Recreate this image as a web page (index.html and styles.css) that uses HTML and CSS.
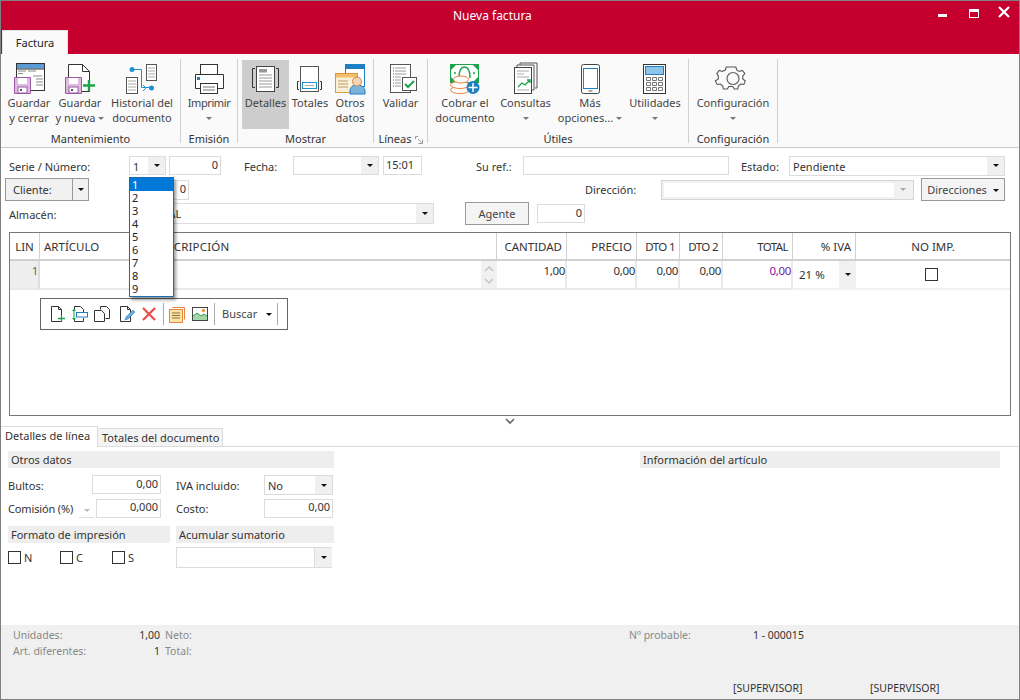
FILE: index.html
```html
<!DOCTYPE html>
<html lang="es">
<head>
<meta charset="utf-8">
<title>Nueva factura</title>
<link rel="stylesheet" href="styles.css">
</head>
<body>
<div class="window">
  <header class="titlebar">
    <div class="title-row">
      <span class="title">Nueva factura</span>
      <div class="win-btns">
        <span class="win-min"></span>
        <span class="win-max"></span>
        <svg class="win-close" width="12" height="12" viewBox="0 0 12 12"><path d="M1 1l10 10M11 1L1 11" stroke="#fff" stroke-width="2.200" fill="none"/></svg>
      </div>
    </div>
    <div class="tab-row"><span class="ribbon-tab">Factura</span></div>
  </header>

  <section class="ribbon">
    <div class="group g1">
      <div class="btns">
        <div class="rb w48">
          <svg width="38" height="34" viewBox="10 61 38 34"><rect x="16.500" y="63.500" width="28" height="27" fill="#fff" stroke="#333"/><rect x="17" y="64" width="27" height="4.500" fill="#5b9bd5"/><path d="M16 69h29" stroke="#333"/><path d="M18 71h8M18 73.500h5M28 71h8M33 76h9M36 79h7M36 82h7M36 85h7" stroke="#888" fill="none"/><path d="M14.500 77.500h16v16h-16z" fill="#dcbcdc" stroke="#9b59a6"/><rect x="18" y="78" width="9" height="6" fill="#fff"/><rect x="18" y="87" width="9" height="6" fill="#fff" stroke="#9b59a6"/><rect x="20" y="89" width="2" height="2" fill="#555"/></svg>
          <span>Guardar</span><span>y cerrar</span>
        </div>
        <div class="rb w54">
          <svg width="38" height="34" viewBox="61 61 38 34"><path d="M68.500 64.500h14l7 7v20h-21z" fill="#fff" stroke="#333"/><path d="M82.500 64.500v7h7" fill="none" stroke="#333"/><path d="M65.500 77.500h16v16h-16z" fill="#dcbcdc" stroke="#9b59a6"/><rect x="69" y="78" width="9" height="6" fill="#fff"/><rect x="69" y="87" width="9" height="6" fill="#fff" stroke="#9b59a6"/><rect x="71" y="89" width="2" height="2" fill="#555"/><path d="M89 80v11M83 85.500h12" stroke="#1aa34a" stroke-width="2.400" fill="none"/></svg>
          <span>Guardar</span><span>y nueva<i class="caret"></i></span>
        </div>
        <div class="rb w70">
          <svg width="38" height="34" viewBox="123 61 38 34"><rect x="146.500" y="64.500" width="10" height="16" fill="#fff" stroke="#555"/><path d="M148 68h7M148 71h7M148 74h7M148 77h7" stroke="#aaa"/><rect x="126.500" y="77.500" width="11" height="16" fill="#fff" stroke="#555"/><path d="M128 81h8M128 84h8M128 87h8M128 90h8" stroke="#aaa"/><path d="M132 69.500h9.500v18h9" fill="none" stroke="#1f8fd0"/><circle cx="132" cy="69.500" r="2.500" fill="#1f8fd0"/><circle cx="151.500" cy="88" r="2.500" fill="#1f8fd0"/><path d="M143 85l3 3-3 3" fill="none" stroke="#1f8fd0"/></svg>
          <span>Historial del</span><span>documento</span>
        </div>
      </div>
      <div class="group-label">Mantenimiento</div>
    </div>

    <div class="group g2">
      <div class="btns">
        <div class="rb w56">
          <svg width="38" height="34" viewBox="190 61 38 34"><rect x="200.500" y="64.500" width="17" height="10" fill="#fff" stroke="#333"/><path d="M195.500 74.500h28v14h-28z" fill="#fff" stroke="#333"/><rect x="197" y="77" width="3" height="3" fill="#1f7fc4"/><rect x="200.500" y="83.500" width="17" height="10" fill="#fff" stroke="#333"/><path d="M203 87h12M203 90h12" stroke="#777"/></svg>
          <span>Imprimir</span><span><i class="caret solo"></i></span>
        </div>
      </div>
      <div class="group-label">Emisión</div>
    </div>

    <div class="group g3">
      <div class="btns">
        <div class="rb w47 active">
          <svg width="38" height="34" viewBox="246 61 38 34"><rect x="255.500" y="66.500" width="18" height="25" fill="#fff" stroke="#444"/><rect x="258" y="69" width="8" height="3.500" fill="#999"/><path d="M258 75h13M258 78h13M258 81h13M258 84h13M258 87h13" stroke="#999"/><path d="M254 68.500h-2.500v19h2.500M275 68.500h2.500v19h-2.500" fill="none" stroke="#333"/></svg>
          <span>Detalles</span>
        </div>
        <div class="rb w42">
          <svg width="38" height="34" viewBox="291 61 38 34"><rect x="300.500" y="66.500" width="18" height="25" fill="#fff" stroke="#555"/><rect x="302.500" y="82.500" width="14" height="6" fill="#fff" stroke="#1f8fd0"/><path d="M305 85.500h9" stroke="#aaa"/><path d="M299 81.500h-1.500v8h1.500M320 81.500h1.500v8h-1.500" fill="none" stroke="#333"/></svg>
          <span>Totales</span>
        </div>
        <div class="rb w38">
          <svg width="34" height="34" viewBox="333 61 34 34"><rect x="345.500" y="64.500" width="19" height="22" fill="#fff" stroke="#1f7fc4"/><rect x="346" y="65" width="18" height="4" fill="#1f7fc4"/><rect x="335.500" y="73.500" width="22" height="19" fill="#fdf0d8" stroke="#d99a3c"/><rect x="336" y="74" width="21" height="3.500" fill="#f3bd6c"/><path d="M338 81h10M338 84h10M338 87h10" stroke="#b89a6a"/><path d="M350 94v-3c0-4 3-6 7-6s8 2 8 6v3z" fill="#7bb3da" stroke="#1f7fc4"/><circle cx="357" cy="81.500" r="4.500" fill="#f7d3b5" stroke="#c98a55"/></svg>
          <span>Otros</span><span>datos</span>
        </div>
      </div>
      <div class="group-label">Mostrar</div>
    </div>

    <div class="group g4">
      <div class="btns">
        <div class="rb w53">
          <svg width="38" height="34" viewBox="381 61 38 34"><rect x="389.500" y="64.500" width="20" height="28" fill="#fff" stroke="#555"/><path d="M394 68h11M394 71h11M394 74h11M394 77h6M394 80h6M394 83h6M394 86h6" stroke="#999"/><path d="M392 68h1M392 71h1M392 74h1M392 77h1M392 80h1M392 83h1M392 86h1" stroke="#c0392b"/><rect x="401.500" y="77.500" width="14" height="13" fill="#fff" stroke="#555"/><path d="M404 84l3 3 6-6" fill="none" stroke="#1aa34a" stroke-width="2"/></svg>
          <span>Validar</span>
        </div>
      </div>
      <div class="group-label lines">Líneas<svg class="launcher" width="8" height="8" viewBox="0 0 8 8"><path d="M.5 3V.5H3M3 3l3.500 3.500M7.500 3.500v4h-4" fill="none" stroke="#999"/></svg></div>
    </div>

    <div class="group g5">
      <div class="btns">
        <div class="rb w62">
          <svg width="38" height="34" viewBox="446 61 38 34"><rect x="450.500" y="64.500" width="28" height="18" fill="#fff" stroke="#1aa34a"/><path d="M451 65h5l-5 5zM478 65h-5l5 5zM451 82h5l-5-5zM478 82h-5l5-5z" fill="#1aa34a"/><path d="M459 78c0-8 2-11 5.500-11s5.500 3 5.500 11" fill="none" stroke="#1aa34a" stroke-width="1.500"/><circle cx="455" cy="73" r="1" fill="#1aa34a"/><circle cx="474" cy="73" r="1" fill="#1aa34a"/><ellipse cx="460" cy="90" rx="9.500" ry="3.500" fill="#fff" stroke="#e8843c"/><ellipse cx="460" cy="85" rx="9.500" ry="3.500" fill="#fff" stroke="#e8843c"/><ellipse cx="461" cy="79.500" rx="7.500" ry="3.500" fill="#fff" stroke="#e8843c"/><circle cx="473" cy="87.500" r="6.500" fill="#1f7fc4"/><path d="M473 83v9M468.500 87.500h9" stroke="#fff" stroke-width="1.500"/></svg>
          <span>Cobrar el</span><span>documento</span>
        </div>
        <div class="rb w59">
          <svg width="38" height="34" viewBox="506 61 38 34"><path d="M519 65.500v-2.500h17v25h-2" fill="none" stroke="#555"/><path d="M516 67.500v-2.500h17v25h-2" fill="#fff" stroke="#555"/><rect x="513.500" y="67.500" width="17" height="26" fill="#fff" stroke="#444"/><path d="M516 71h12M516 74h7M516 77h12" stroke="#aaa"/><path d="M517 87l4-4 3 2 5-5M526 80h3v3" fill="none" stroke="#1aa34a" stroke-width="1.300"/><path d="M516 90h12" stroke="#aaa"/></svg>
          <span>Consultas</span><span><i class="caret solo"></i></span>
        </div>
        <div class="rb w70">
          <svg width="38" height="34" viewBox="571 61 38 34"><rect x="581.500" y="64.500" width="18" height="29" rx="2" fill="#fff" stroke="#444"/><rect x="583.500" y="68.500" width="14" height="20" fill="#fff" stroke="#1f7fc4"/><path d="M588.500 91h4" stroke="#555"/></svg>
          <span>Más</span><span>opciones...<i class="caret"></i></span>
        </div>
        <div class="rb w60">
          <svg width="38" height="34" viewBox="636 61 38 34"><rect x="643.500" y="64.500" width="22" height="29" fill="#fff" stroke="#333"/><rect x="645.500" y="66.500" width="18" height="8" fill="#8ec3ea" stroke="#1f7fc4"/><path d="M646.500 77.500h4v3h-4zM652.500 77.500h4v3h-4zM658.500 77.500h4v3h-4zM646.500 82.500h4v3h-4zM652.500 82.500h4v3h-4zM658.500 82.500h4v3h-4zM646.500 87.500h4v3h-4zM652.500 87.500h4v3h-4zM658.500 87.500h4v3h-4z" fill="#fff" stroke="#777"/></svg>
          <span>Utilidades</span><span><i class="caret solo"></i></span>
        </div>
      </div>
      <div class="group-label">Útiles</div>
    </div>

    <div class="group g6">
      <div class="btns">
        <div class="rb w88">
          <svg width="38" height="34" viewBox="714 61 38 34"><path d="M729 66.500h-3.500l-1 3-3 1.500-3-1-2.500 3 1.500 2.500v3l-3 2 2 3.500 3-.5 2.500 2 .5 3h4l1.500-2.500h4l1.500 2.500h3.500l.5-3 2.500-2 3 .5 1.500-3.500-2.500-2v-3l2-2.500-2.500-3-3 1-2.500-1.500-1-3h-4.500z" transform="translate(.8 .5)" fill="none" stroke="#555" stroke-width="1.100"/><circle cx="733" cy="78.500" r="6" fill="none" stroke="#666" stroke-width="1.200"/></svg>
          <span>Configuración</span><span><i class="caret solo"></i></span>
        </div>
      </div>
      <div class="group-label">Configuración</div>
    </div>
  </section>

  <section class="form">
    <div class="form-row r1">
      <label class="lbl l-serie">Serie / Número:</label>
      <div class="serie-wrap">
        <div class="combo c-serie"><span class="val">1</span><span class="arrow"><i></i></span></div>
        <ul class="dropdown">
          <li class="sel">1</li><li>2</li><li>3</li><li>4</li><li>5</li><li>6</li><li>7</li><li>8</li><li>9</li>
        </ul>
      </div>
      <div class="input i-num">0</div>
      <label class="lbl l-fecha">Fecha:</label>
      <div class="combo c-fecha"><span class="val"></span><span class="arrow"><i></i></span></div>
      <div class="input i-time">15:01</div>
      <label class="lbl l-ref">Su ref.:</label>
      <div class="input i-ref"></div>
      <label class="lbl l-estado">Estado:</label>
      <div class="combo c-estado"><span class="val">Pendiente</span><span class="arrow"><i></i></span></div>
    </div>

    <div class="form-row r2">
      <div class="btn-split"><span class="bs-text">Cliente:</span><span class="bs-arrow"><i></i></span></div>
      <div class="input i-cli">0</div>
      <label class="lbl l-dir">Dirección:</label>
      <div class="combo disabled c-dir"><span class="val"></span><span class="arrow"><i></i></span></div>
      <div class="btn btn-dir">Direcciones<i class="tri"></i></div>
    </div>

    <div class="form-row r3">
      <label class="lbl l-serie">Almacén:</label>
      <div class="combo c-alm"><span class="val">GENERAL</span><span class="arrow"><i></i></span></div>
      <div class="btn btn-agente">Agente</div>
      <div class="input i-agente">0</div>
    </div>

    <div class="grid-box">
      <div class="g-head g-cols">
        <div class="th center">LIN</div>
        <div class="th">ARTÍCULO</div>
        <div class="th th-desc">DESCRIPCIÓN</div>
        <div class="th right">CANTIDAD</div>
        <div class="th right">PRECIO</div>
        <div class="th right tight">DTO 1</div>
        <div class="th right tight">DTO 2</div>
        <div class="th right tight">TOTAL</div>
        <div class="th right">% IVA</div>
        <div class="th center">NO IMP.</div>
      </div>
      <div class="g-row g-cols">
        <div class="td lin">1</div>
        <div class="td"></div>
        <div class="td desc"><span class="spin"><svg width="12" height="26" viewBox="0 0 12 26"><path d="M2 9l4-4 4 4M2 17l4 4 4-4" fill="none" stroke="#c4c4c4" stroke-width="1.500"/></svg></span></div>
        <div class="td num">1,00</div>
        <div class="td num">0,00</div>
        <div class="td num">0,00</div>
        <div class="td num">0,00</div>
        <div class="td num total">0,00</div>
        <div class="td iva"><span class="iva-val">21 %</span><span class="arrow"><i></i></span></div>
        <div class="td noimp"><span class="check"></span></div>
      </div>
      <div class="mini-bar">
        <svg class="mi" width="18" height="18" viewBox="0 0 18 18"><path d="M2.500 1.500h7l3 3v12h-10z" fill="#fff" stroke="#333"/><path d="M9.500 1.500v3h3" fill="none" stroke="#333"/><path d="M12.500 10v7M9 13.500h7" stroke="#1aa34a" stroke-width="1.300"/></svg>
        <svg class="mi" width="18" height="18" viewBox="0 0 18 18"><path d="M3.500 4.500v-3h6l3 3v2.500M3.500 13v3.500h9V13" fill="none" stroke="#333"/><rect x="5.500" y="7.500" width="11" height="4.500" fill="#fff" stroke="#1f7fc4"/><path d="M3 5v9" stroke="#1aa34a"/><path d="M1 6l2-2.500L5 6zM1 13l2 2.500L5 13z" fill="#1aa34a"/></svg>
        <svg class="mi mi-wide" width="18" height="18" viewBox="0 0 18 18"><path d="M7.500 4.500v-3h6l3 3v9h-4" fill="#fff" stroke="#333"/><path d="M1.500 5.500h7l3 3v8h-10z" fill="#fff" stroke="#333"/></svg>
        <svg class="mi" width="18" height="18" viewBox="0 0 18 18"><path d="M2.500 1.500h7l3 3v12h-10z" fill="#fff" stroke="#333"/><path d="M9.500 1.500v3h3" fill="none" stroke="#333"/><path d="M7 15l1-3 7-7 2 2-7 7z" fill="#6ea9dc" stroke="#1f7fc4" stroke-width=".6"/></svg>
        <svg class="mi" width="18" height="18" viewBox="0 0 18 18"><path d="M3 3l12 12M15 3L3 15" stroke="#ee4b4b" stroke-width="2.200" fill="none"/></svg>
        <span class="mi-sep"></span>
        <svg class="mi mi-note" width="18" height="18" viewBox="0 0 18 18"><path d="M4.500 2.500h12v12" fill="none" stroke="#e8843c"/><rect x="1.500" y="4.500" width="13" height="13" fill="#fbe3a8" stroke="#e8843c"/><path d="M4 8h8M4 10.500h8M4 13h8" stroke="#8a6d3b"/></svg>
        <svg class="mi" width="18" height="18" viewBox="0 0 18 18"><rect x="1.500" y="2.500" width="15" height="13" fill="#fff" stroke="#444"/><path d="M2 15v-4l4-3 4 3 3-2 3 2v4z" fill="#a5d6a7"/><path d="M2 11l4-3 4 3 3-2 3 2" fill="none" stroke="#3b9a50"/><circle cx="12.500" cy="5.500" r="1.800" fill="#f09a4e"/></svg>
        <span class="mi-sep"></span>
        <span class="mi-text">Buscar</span><i class="tri mi-tri"></i>
        <span class="mi-sep"></span>
      </div>
    </div>

    <div class="splitter"><svg width="10" height="7" viewBox="0 0 10 7"><path d="M1 1l4 4 4-4" fill="none" stroke="#666" stroke-width="1.600"/></svg></div>

    <div class="tabs">
      <span class="tab active">Detalles de línea</span>
      <span class="tab">Totales del documento</span>
    </div>

    <div class="panel">
      <div class="panel-left">
        <div class="sec-head">Otros datos</div>
        <div class="p-grid">
          <div class="p-cell">
            <label class="plbl l-b">Bultos:</label>
            <div class="input i-bultos">0,00</div>
          </div>
          <div class="p-cell">
            <label class="plbl l-i">IVA incluido:</label>
            <div class="combo c-iva"><span class="val">No</span><span class="arrow"><i></i></span></div>
          </div>
          <div class="p-cell low">
            <label class="plbl l-c">Comisión (%)</label>
            <span class="spin-down"><i></i></span>
            <div class="input i-com">0,000</div>
          </div>
          <div class="p-cell low">
            <label class="plbl l-i">Costo:</label>
            <div class="input i-costo">0,00</div>
          </div>
        </div>
        <div class="sub-heads">
          <div class="sec-head h-fmt">Formato de impresión</div>
          <div class="sec-head h-acu">Acumular sumatorio</div>
        </div>
        <div class="sub-row">
          <div class="checks">
            <label class="chk"><span class="check"></span>N</label>
            <label class="chk"><span class="check"></span>C</label>
            <label class="chk"><span class="check"></span>S</label>
          </div>
          <div class="combo c-acu"><span class="val"></span><span class="arrow"><i></i></span></div>
        </div>
      </div>
      <div class="panel-right">
        <div class="sec-head">Información del artículo</div>
      </div>
    </div>
  </section>

  <footer class="statusbar">
    <div class="st-row st-1">
      <span class="st-l st-name">Unidades:</span><span class="st-v st-val">1,00</span><span class="st-l st-neto">Neto:</span>
      <span class="st-l st-prob">Nº probable:</span><span class="st-v st-pval">1 - 000015</span>
    </div>
    <div class="st-row st-2">
      <span class="st-l st-name">Art. diferentes:</span><span class="st-v st-val">1</span><span class="st-l st-neto">Total:</span>
    </div>
    <div class="st-row st-3">
      <span class="st-v st-sup1">[SUPERVISOR]</span><span class="st-v st-sup2">[SUPERVISOR]</span>
    </div>
  </footer>
</div>
</body>
</html>
```

FILE: styles.css
```css
* { box-sizing: border-box; }
html, body { margin: 0; padding: 0; }
body { width: 1020px; height: 700px; overflow: hidden; background: #fff; font-family: "Noto Sans", "Open Sans", sans-serif; font-size: 11px; color: #333; }
.window { width: 1020px; height: 700px; border: 1px solid #808080; display: flex; flex-direction: column; background: #fff; }

/* Title bar */
.titlebar { height: 53px; background: #c5002e; flex: none; display: flex; flex-direction: column; }
.title-row { height: 29px; display: flex; align-items: flex-start; }
.title { margin: 7px 0 0 452px; color: #fff; font-size: 12px; line-height: 16px; }
.win-btns { margin-left: auto; display: flex; align-items: flex-start; }
.win-min { width: 9px; height: 3px; background: #fff; margin: 13px 22px 0 0; }
.win-max { width: 10px; height: 9px; border: 1px solid #fff; border-top-width: 3px; margin: 8px 19px 0 0; }
.win-close { margin: 5px 9px 0 0; }
.tab-row { height: 24px; padding-left: 1px; }
.ribbon-tab { display: block; width: 66px; height: 24px; background: #fafafa; border: 1px solid #e4e4e4; border-bottom: 0; text-align: center; line-height: 24px; color: #222; font-size: 11px; }

/* Ribbon */
.ribbon { height: 94px; flex: none; background: #fafafa; border-bottom: 1px solid #c8c8c8; padding-top: 5px; display: flex; align-items: flex-start; }
.group { height: 84px; border-right: 1px solid #d0d0d0; flex: none; padding-top: 1px; }
.g1 { width: 180px; padding-left: 4px; }
.g2 { width: 57px; }
.g3 { width: 136px; padding-left: 4px; }
.g4 { width: 54px; }
.g5 { width: 261px; padding-left: 6px; }
.g6 { width: 89px; }
.btns { display: flex; height: 69px; }
.rb { display: flex; flex-direction: column; align-items: center; flex: none; color: #444; line-height: 15px; white-space: nowrap; padding-top: 1px; }
.rb svg { display: block; flex: none; }
.rb.active { background: #cdcdcd; }
.w38 { width: 38px; } .w42 { width: 42px; } .w47 { width: 47px; } .w48 { width: 48px; } .w53 { width: 53px; } .w54 { width: 54px; } .w56 { width: 56px; } .w59 { width: 59px; } .w60 { width: 60px; } .w62 { width: 62px; } .w70 { width: 70px; } .w88 { width: 88px; }
.w56 span { letter-spacing: -.4px; }
.caret { display: inline-block; width: 0; height: 0; border: 3px solid transparent; border-top: 3px solid #777; border-bottom: 0; margin-left: 3px; vertical-align: 2px; }
.caret.solo { margin-left: 0; }
.group-label { margin-top: 2px; text-align: center; line-height: 16px; color: #333; white-space: nowrap; }
.g1 .group-label { margin-left: -4px; }
.g3 .group-label { margin-left: -4px; }
.g5 .group-label { margin-left: -6px; }
.lines { display: flex; justify-content: center; align-items: center; gap: 3px; }
.launcher { margin-top: 2px; }

/* Form */
.form { flex: 1; display: flex; flex-direction: column; min-height: 0; padding-top: 8px; }
.form-row { display: flex; align-items: center; flex: none; position: relative; }
.r1 { height: 19px; padding-left: 8px; z-index: 5; }
.r2 { height: 23px; margin-top: 3px; padding-left: 4px; }
.r3 { height: 23px; margin-top: 1px; padding-left: 8px; }
.lbl { color: #333; line-height: 15px; white-space: nowrap; flex: none; }
.r1 .lbl { padding-top: 2px; }
.r3 .lbl { padding-top: 2px; }
.l-serie { width: 120px; }
.l-fecha { width: 49px; margin-left: 23px; }
.l-ref { width: 47px; margin-left: 54px; }
.l-estado { width: 48px; margin-left: 12px; }
.l-dir { width: 76px; margin-left: 396px; }

.input { height: 19px; border: 1px solid #dcdcdc; background: #fff; text-align: right; padding: 0 2px; line-height: 15px; color: #333; flex: none; font-size: 11px; }
.i-num { width: 52px; margin-left: 3px; }
.i-time { width: 39px; margin-left: 4px; text-align: left; }
.i-ref { width: 206px; }
.i-cli { width: 60px; margin-left: 40px; height: 20px; }
.i-agente { width: 48px; margin-left: 8px; }

.combo { display: flex; height: 19px; border: 1px solid #dcdcdc; background: #fff; flex: none; }
.combo .val { flex: 1; padding-left: 3px; line-height: 19px; color: #333; overflow: hidden; white-space: nowrap; }
.arrow { width: 17px; flex: none; background: #f0f0f0; display: flex; align-items: center; justify-content: center; }
.arrow i, .bs-arrow i, .tri { display: inline-block; width: 0; height: 0; border: 3px solid transparent; border-top: 3px solid #111; border-bottom: 0; }
.serie-wrap { position: relative; flex: none; }
.c-serie { width: 37px; }
.c-fecha { width: 86px; }
.c-estado { width: 216px; height: 20px; }
.c-dir { width: 253px; height: 20px; }
.c-alm { width: 305px; height: 21px; }
.disabled { background: #f1f1f1; border-color: #d4d4d4; padding: 2px; }
.disabled .val { background: #fff; }
.disabled .arrow { background: transparent; }
.disabled .arrow i { border-top-color: #aaa; }

.dropdown { position: absolute; left: 0; top: 21px; width: 45px; height: 120px; margin: 0; padding: 0; list-style: none; background: #fff; border: 1px solid #1a6bb0; box-shadow: 2px 3px 3px rgba(0,0,0,.4); z-index: 10; }
.dropdown li { height: 13px; line-height: 13px; padding-left: 2px; color: #222; }
.dropdown .sel { background: #0078d7; color: #fff; }

.btn-split { display: flex; width: 84px; height: 23px; border: 1px solid #999; background: #f1f1f1; flex: none; }
.bs-text { width: 67px; border-right: 1px solid #999; padding-left: 7px; line-height: 21px; }
.bs-arrow { flex: 1; display: flex; align-items: center; justify-content: center; }
.btn { height: 23px; border: 1px solid #999; background: #f4f4f4; text-align: center; line-height: 21px; flex: none; color: #444; }
.btn-dir { width: 84px; margin-left: 7px; }
.btn-dir .tri { margin-left: 6px; vertical-align: 2px; }
.btn-agente { width: 64px; margin-left: 31px; }

/* Grid */
.grid-box { width: 1002px; height: 184px; margin: 7px 0 0 8px; border: 1px solid #777; flex: none; background: #fff; }
.g-cols { display: grid; grid-template-columns: 30px 106px 351px 70px 70px 43px 43px 70px 63px 154px; }
.g-head { height: 28px; border-bottom: 2px solid #d0d0d0; }
.th { border-right: 1px solid #d0d0d0; line-height: 27px; padding: 0 4px; color: #333; font-size: 11.500px; white-space: nowrap; overflow: hidden; }
.th:last-child { border-right: 0; }
.th-desc { padding-left: 6px; letter-spacing: .2px; }
.tight { letter-spacing: -.6px; }
.center { text-align: center; }
.right { text-align: right; }
.g-row { height: 29px; background: #f1f1f1; }
.td { background: #fff; border-right: 2px solid #e9e9e9; border-bottom: 2px solid #e9e9e9; font-size: 11.500px; padding: 1px 0 0 2px; line-height: 18px; letter-spacing: -.3px; }
.lin { background: #eeeeee; text-align: right; color: #666; border-right-color: #dedede; }
.desc { position: relative; display: flex; justify-content: flex-end; padding: 0; border-right: 0; }
.spin { width: 16px; height: 27px; background: #f1f1f1; display: flex; align-items: center; justify-content: center; }
.num { text-align: right; }
.total { color: #7a1a9b; }
.iva { display: flex; padding: 0; border-right: 0; border-bottom: 2px solid #f1f1f1; letter-spacing: 0; }
.iva-val { flex: 1; padding: 5px 0 0 6px; }
.noimp { display: flex; justify-content: center; padding: 7px 4px 0 0; border-right: 0; border-bottom: 2px solid #f1f1f1; }
.check { display: inline-block; width: 13px; height: 13px; border: 1px solid #333; background: #fff; flex: none; }

.mini-bar { display: flex; align-items: center; width: 248px; height: 32px; margin: 8px 0 0 30px; border: 1px solid #666; background: #fff; padding-left: 8px; }
.mi { flex: none; margin-right: 4px; }
.mi-wide { margin-right: 7px; }
.mi-note { margin-right: 5px; }
.mi-sep { width: 1px; height: 22px; background: #aaa; flex: none; margin: 0 4px 0 1px; }
.mi-text { color: #444; width: 44px; flex: none; margin: 0 0 2px 3px; line-height: 15px; }
.mi-tri { margin-right: 4px; flex: none; }

.splitter { height: 10px; flex: none; display: flex; justify-content: center; align-items: center; }

/* Tabs */
.tabs { display: flex; align-items: flex-end; height: 21px; flex: none; border-bottom: 1px solid #dcdcdc; }
.tab { height: 18px; line-height: 17px; padding: 0 4px; border: 1px solid #dcdcdc; border-bottom: 0; border-left: 0; background: #f4f4f4; color: #333; margin-right: 0; white-space: nowrap; width: 125px; text-align: center; }
.tab.active { height: 21px; width: 97px; background: #fff; border-left: 0; line-height: 17px; margin-bottom: -1px; text-align: left; padding-left: 4px; }

/* Panel */
.panel { display: flex; padding: 4px 0 0 7px; flex: none; }
.panel-left { width: 326px; flex: none; }
.panel-right { width: 360px; margin-left: 306px; flex: none; }
.sec-head { height: 17px; background: #eeeeee; line-height: 18px; padding-left: 3px; color: #333; }
.p-grid { display: grid; grid-template-columns: 168px 157px; grid-auto-rows: 24px; margin-top: 7px; }
.p-cell { display: flex; align-items: flex-start; }
.plbl { flex: none; line-height: 21px; white-space: nowrap; }
.low .plbl { line-height: 19px; }
.low .input { line-height: 14px; }
.l-b { width: 84px; }
.l-i { width: 88px; }
.l-c { width: 71px; letter-spacing: -.15px; }
.i-bultos { width: 69px; }
.c-iva { width: 69px; height: 20px; }
.i-com { width: 65px; margin-left: 2px; }
.i-costo { width: 69px; }
.spin-down { width: 15px; height: 19px; border-bottom: 1px solid #ddd; display: flex; align-items: center; justify-content: center; flex: none; }
.spin-down i { display: block; width: 0; height: 0; border: 3px solid transparent; border-top: 3px solid #bbb; border-bottom: 0; margin-top: 4px; }
.sub-heads { display: flex; gap: 6px; margin-top: 3px; }
.h-fmt { width: 162px; }
.h-acu { width: 158px; }
.sub-row { display: flex; margin-top: 4px; }
.checks { display: flex; width: 168px; padding-top: 4px; }
.chk { display: flex; width: 52px; align-items: center; gap: 3px; line-height: 13px; height: 13px; }
.c-acu { width: 156px; height: 21px; border-right: 0; }
.c-acu .val { border-right: 1px solid #dcdcdc; }

/* Status bar */
.statusbar { height: 74px; flex: none; background: #f0f0f0; padding-top: 2px; font-size: 10.500px; }
.st-row { display: flex; height: 16px; line-height: 16px; white-space: nowrap; }
.st-l { color: #888; }
.st-v { color: #333; }
.st-name { width: 102px; padding-left: 12px; flex: none; }
.st-val { width: 57px; text-align: right; flex: none; }
.st-neto { margin-left: 5px; width: 464px; flex: none; }
.st-prob { width: 124px; flex: none; }
.st-3 { margin-top: 21px; padding-left: 732px; }
.st-sup1 { width: 137px; flex: none; }
```
